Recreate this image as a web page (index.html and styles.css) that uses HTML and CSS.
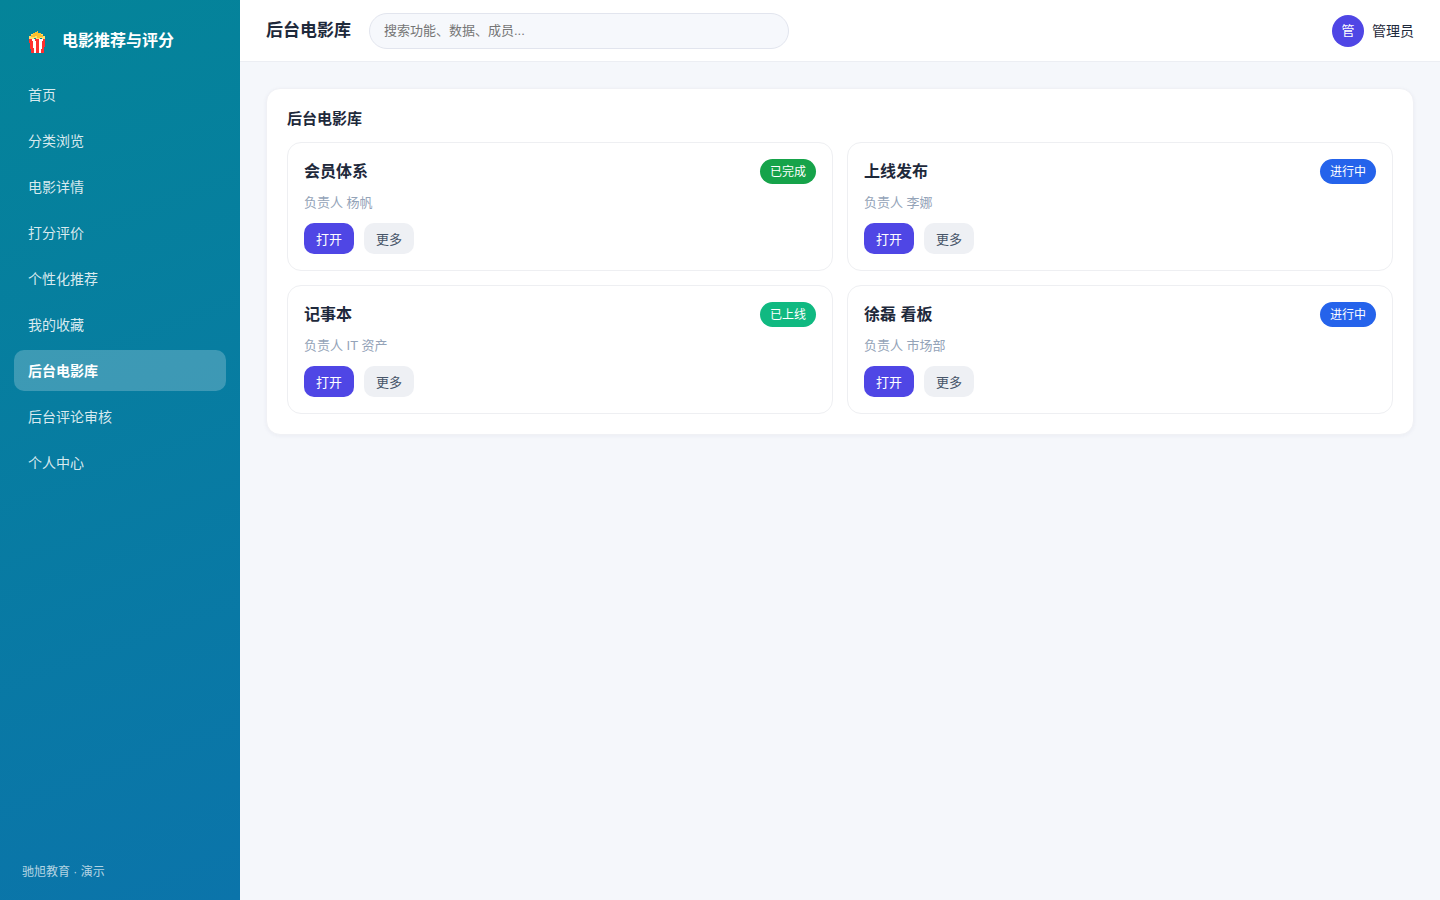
FILE: index.html
```html
<!DOCTYPE html>
<html lang="zh-CN">
<head>
<meta charset="utf-8">
<title>后台电影库</title>
<link rel="stylesheet" href="styles.css">
</head>
<body>
<div class="app">
  <aside class="sidebar">
    <div class="brand">
      <svg class="logo" viewBox="0 0 18 24" aria-hidden="true">
        <path fill="#ff2f2f" d="M1 9h16v8h-1v6H3v-4H2v-6H1z"/>
        <path fill="#fff" d="M4 9h3v2h1v12H6v-5H5v-7H4zM11 9h4v2h-1v8h-1v4h-2z"/>
        <path fill="#ffe070" d="M1 9V6h2V4h12v2h2v3h-3v-1h-2v1H8V8H6v1z"/>
        <path fill="#fbc02d" d="M3 7V5h2V3h2V2h2V1h1v2h3v2h2v2h-3v1H9V6H7v1z"/>
      </svg>
      <span>电影推荐与评分</span>
    </div>
    <nav class="nav">
      <a href="#">首页</a>
      <a href="#">分类浏览</a>
      <a href="#">电影详情</a>
      <a href="#">打分评价</a>
      <a href="#">个性化推荐</a>
      <a href="#">我的收藏</a>
      <a href="#" class="active" aria-current="page">后台电影库</a>
      <a href="#">后台评论审核</a>
      <a href="#">个人中心</a>
    </nav>
    <div class="sidebar-foot">驰旭教育 · 演示</div>
  </aside>
  <div class="main">
    <header class="topbar">
      <h1>后台电影库</h1>
      <input class="search" type="search" aria-label="搜索" placeholder="搜索功能、数据、成员...">
      <div class="user"><span class="avatar">管</span><span>管理员</span></div>
    </header>
    <main class="content">
      <section class="panel">
        <h2>后台电影库</h2>
        <div class="grid">
          <article class="card">
            <div class="card-head"><h3>会员体系</h3><span class="badge done">已完成</span></div>
            <p>负责人 杨帆</p>
            <div class="actions"><button class="btn primary" type="button">打开</button><button class="btn" type="button">更多</button></div>
          </article>
          <article class="card">
            <div class="card-head"><h3>上线发布</h3><span class="badge doing">进行中</span></div>
            <p>负责人 李娜</p>
            <div class="actions"><button class="btn primary" type="button">打开</button><button class="btn" type="button">更多</button></div>
          </article>
          <article class="card">
            <div class="card-head"><h3>记事本</h3><span class="badge online">已上线</span></div>
            <p>负责人 IT 资产</p>
            <div class="actions"><button class="btn primary" type="button">打开</button><button class="btn" type="button">更多</button></div>
          </article>
          <article class="card">
            <div class="card-head"><h3>徐磊 看板</h3><span class="badge doing">进行中</span></div>
            <p>负责人 市场部</p>
            <div class="actions"><button class="btn primary" type="button">打开</button><button class="btn" type="button">更多</button></div>
          </article>
        </div>
      </section>
    </main>
  </div>
</div>
</body>
</html>
```
FILE: styles.css
```css
* { box-sizing: border-box; margin: 0; }
body {
  font: 14px/21px "Liberation Sans", "Noto Sans CJK SC", sans-serif;
  color: #1e293b;
  background: #f5f7fb;
}
button, input { font-family: inherit; }
.app { display: flex; min-height: 100vh; }

.sidebar {
  flex: none;
  display: flex;
  flex-direction: column;
  width: 240px;
  padding: 20px 14px 19px;
  color: #fff;
  background: linear-gradient(160deg, #048499, #0b74aa);
}
.brand {
  display: flex;
  align-items: center;
  gap: 16px;
  height: 40px;
  padding: 0 14px;
  margin-bottom: 14px;
  font-size: 16px;
  font-weight: 700;
}
.logo { width: 18px; height: 24px; margin-top: 4px; }
.nav { display: flex; flex-direction: column; gap: 5px; }
.nav a {
  padding: 11px 14px 9px;
  border-radius: 10px;
  color: rgba(255, 255, 255, .85);
  text-decoration: none;
}
.nav .active { color: #fff; font-weight: 700; background: rgba(255, 255, 255, .22); }
.sidebar-foot {
  margin-top: auto;
  padding: 0 8px;
  font-size: 12px;
  line-height: 18px;
  color: rgba(255, 255, 255, .7);
}

.main { flex: 1; min-width: 0; }
.topbar {
  display: flex;
  align-items: center;
  gap: 18px;
  height: 62px;
  padding: 0 26px;
  background: #fff;
  border-bottom: 1px solid #eceef3;
}
.topbar h1 { font-size: 17px; line-height: 27px; }
.search {
  flex: 0 1 420px;
  min-width: 0;
  height: 36px;
  padding: 0 14px;
  border: 1px solid #e2e5ee;
  border-radius: 18px;
  background: #f6f8fc;
  font-size: 13px;
  outline: none;
}
.search::placeholder { color: #757575; }
.user { display: flex; align-items: center; gap: 8px; margin-left: auto; line-height: 22px; }
.avatar {
  display: grid;
  place-items: center;
  width: 32px;
  height: 32px;
  border-radius: 50%;
  color: #fff;
  background: #4f46e5;
  font-size: 13px;
}

.content { padding: 26px; }
.panel {
  padding: 20px;
  border: 1px solid #f0f1f5;
  border-radius: 14px;
  background: #fff;
  box-shadow: 0 1px 4px rgba(30, 41, 90, .05);
}
.panel h2 { margin-bottom: 14px; font-size: 15px; line-height: 19px; }
.grid { display: grid; grid-template-columns: 1fr 1fr; gap: 14px; }
.card { padding: 16px; border: 1px solid #eeeff2; border-radius: 14px; }
.card-head { display: flex; align-items: center; justify-content: space-between; }
.card h3 { font-size: 16px; line-height: 25px; }
.badge {
  padding: 4px 10px 2px;
  border-radius: 13px;
  color: #fff;
  font-size: 12px;
  line-height: 19px;
}
.done { background: #16a34a; }
.doing { background: #2563eb; }
.online { background: #10b981; }
.card p { margin: 8px 0 10px; font-size: 13px; color: #94a3b8; }
.actions { display: flex; gap: 10px; }
.btn {
  height: 31px;
  padding: 0 12px;
  border: 0;
  border-radius: 10px;
  color: #475569;
  background: #eef0f4;
  font-size: 13px;
  cursor: pointer;
}
.primary { color: #fff; background: #4f46e5; }
```
